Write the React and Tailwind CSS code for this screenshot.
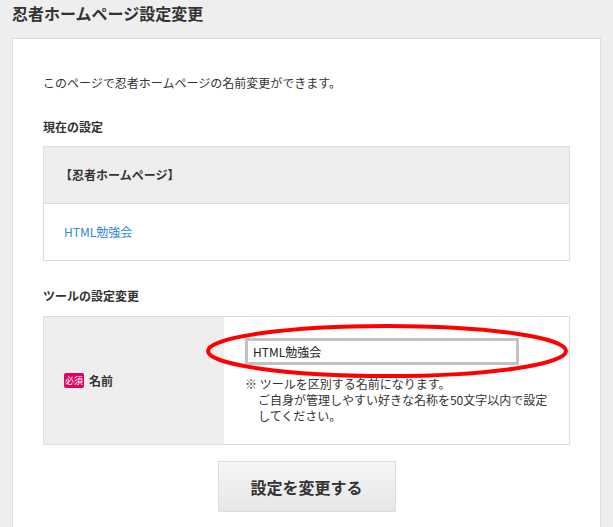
import React from "react";

const font = {
  fontFamily: '"Noto Sans CJK JP", "Noto Sans", sans-serif',
};

const App = () => {
  return (
    <div
      className="min-h-[527px] w-full bg-[#eeeeee] text-[#333333] overflow-hidden"
      style={font}
    >
      <h1 className="px-3 pt-[3px] text-[16px] leading-[20px] font-bold text-[#333333]">
        忍者ホームページ設定変更
      </h1>

      {/* Card */}
      <div className="mt-[15px] ml-3 mr-3 bg-white border border-[#dddddd] px-[30px] pt-[35px] pb-10 text-[12px] leading-[18px]">
        <p>このページで忍者ホームページの名前変更ができます。</p>

        <h2 className="mt-[26px] font-bold">現在の設定</h2>
        <div className="mt-[10px] border border-[#dddddd]">
          <div className="h-[57px] flex items-center px-[16px] bg-[#eeeeee] border-b border-[#dddddd] font-bold">
            【忍者ホームページ】
          </div>
          <div className="h-[56px] flex items-center px-[20px]">
            <a href="#" className="text-[#2b8bd6]">
              HTML勉強会
            </a>
          </div>
        </div>

        <h2 className="mt-[26px] font-bold">ツールの設定変更</h2>
        <div className="mt-[11px] border border-[#dddddd] flex">
          <div className="w-[180px] shrink-0 bg-[#eeeeee] flex items-center px-[20px] font-bold">
            <span className="inline-flex items-center justify-center h-[15px] w-[20px] mr-[5px] rounded-[2px] bg-[#e4005b] text-white text-[9px] leading-[15px] font-normal">
              必須
            </span>
            名前
          </div>
          <div className="flex-1 pl-[21px] pt-[21px] pb-[20px]">
            <div className="relative w-[274px]">
              <input
                type="text"
                defaultValue="HTML勉強会"
                className="block w-full h-[27px] border-[3px] border-[#c2c2c2] px-[5px] text-[12px] text-[#222222] outline-none"
                style={font}
              />
              {/* red highlight ring drawn over the input */}
              <svg
                className="absolute left-[-40px] top-[-16px] pointer-events-none"
                width="366"
                height="60"
                viewBox="0 0 366 60"
              >
                <ellipse
                  cx="182"
                  cy="29"
                  rx="179"
                  ry="25"
                  fill="none"
                  stroke="#ff0000"
                  strokeWidth="4"
                />
              </svg>
            </div>
            <p className="mt-[11px] w-[309px] pl-[13px] -indent-[13px] leading-[16px]">
              ※ ツールを区別する名前になります。
              <br />
              ご自身が管理しやすい好きな名称を50文字以内で設定してください。
            </p>
          </div>
        </div>

        <div className="mt-[16px] flex justify-center">
          <button
            type="button"
            className="w-[178px] h-[51px] border border-[#dddddd] bg-gradient-to-b from-[#f5f5f5] via-[#eeeeee] to-[#e6e6e6] text-[16px] font-bold text-[#333333]"
            style={font}
          >
            設定を変更する
          </button>
        </div>
      </div>
    </div>
  );
};

export default App;
